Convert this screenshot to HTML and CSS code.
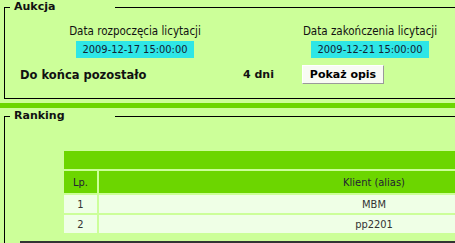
FILE: index.html
```html
<!DOCTYPE html>
<html lang="pl">
<head>
<meta charset="utf-8">
<title>Aukcja</title>
<link rel="stylesheet" href="styles.css">
</head>
<body>
<div class="page">
  <fieldset class="box">
    <legend class="box-title">Aukcja</legend>
    <div class="dates">
      <div class="date-cell">
        <div class="date-label">Data rozpoczęcia licytacji</div>
        <div class="date-value">2009-12-17 15:00:00</div>
      </div>
      <div class="date-cell">
        <div class="date-label">Data zakończenia licytacji</div>
        <div class="date-value">2009-12-21 15:00:00</div>
      </div>
    </div>
    <div class="remain">
      <span class="remain-label">Do końca pozostało</span>
      <span class="remain-value">4 dni</span>
      <button class="btn" type="button">Pokaż opis</button>
    </div>
  </fieldset>
  <div class="divider"></div>
  <fieldset class="box box-ranking">
    <legend class="box-title">Ranking</legend>
    <table class="ranking">
      <thead>
        <tr class="head-top"><th colspan="2"></th></tr>
        <tr class="head-cols"><th class="col-lp">Lp.</th><th class="col-client">Klient (alias)</th></tr>
      </thead>
      <tbody>
        <tr><td>1</td><td>MBM</td></tr>
        <tr><td>2</td><td>pp2201</td></tr>
      </tbody>
    </table>
    <div class="ranking-rule"></div>
  </fieldset>
</div>
</body>
</html>
```

FILE: styles.css
```css
html, body {
  margin: 0;
  padding: 0;
  overflow: hidden;
  background: #ccff99;
}
body {
  font-family: "DejaVu Sans", Verdana, sans-serif;
  font-size: 11px;
  color: #111;
}
.page {
  width: 715px;
}
.box {
  margin: 0 0 0 4px;
  padding: 10px 0 14px 5px;
  border: 1px solid #000;
  min-width: 0;
}
.box-title {
  padding: 0 4px;
  width: 97px;
  font-weight: bold;
  font-size: 11px;
  line-height: 14px;
  color: #111;
}
.dates {
  display: grid;
  grid-template-columns: 250px 220px;
}
.date-cell {
  display: flex;
  flex-direction: column;
  align-items: center;
  gap: 3px;
}
.date-label {
  font-stretch: condensed;
  font-size: 11.5px;
  line-height: 14px;
}
.date-value {
  width: 118px;
  height: 17px;
  line-height: 17px;
  text-align: center;
  background: #2ee6e6;
  color: #123;
  font-stretch: condensed;
  font-size: 11px;
}
.remain {
  display: grid;
  grid-template-columns: 223px 59px auto;
  align-items: center;
  margin-top: 7px;
  padding-left: 10px;
}
.remain-label {
  font-weight: bold;
  font-size: 11.5px;
}
.remain-value {
  font-weight: bold;
  font-size: 11px;
}
.btn {
  justify-self: start;
  width: 82px;
  height: 19px;
  padding: 0;
  font-family: "DejaVu Sans", Verdana, sans-serif;
  font-weight: bold;
  font-size: 11px;
  color: #000;
  background: #f8fbf4;
  border: 1px solid;
  border-color: #fff #9a9a9a #9a9a9a #fff;
}
.divider {
  height: 5px;
  margin-top: 4px;
  background: #6cd600;
}
.box-ranking {
  margin-top: 1px;
  padding: 26px 0 0 5px;
  border-bottom: none;
  border-right: none;
}
.ranking {
  margin-left: 52px;
  width: 589px;
  border-spacing: 2px;
  font-stretch: condensed;
  font-size: 11px;
  color: #333;
}
.ranking th {
  font-weight: normal;
  background: #6cd600;
  color: #223;
}
.head-top th {
  height: 18px;
  padding: 0;
}
.head-cols th {
  height: 22px;
  padding: 0;
}
.col-lp {
  width: 33px;
}
.ranking td {
  height: 18px;
  padding: 0;
  text-align: center;
  background: #efffe6;
}
.ranking-rule {
  margin: 6px 0 0 10px;
  height: 2px;
  background: #333;
}
```
